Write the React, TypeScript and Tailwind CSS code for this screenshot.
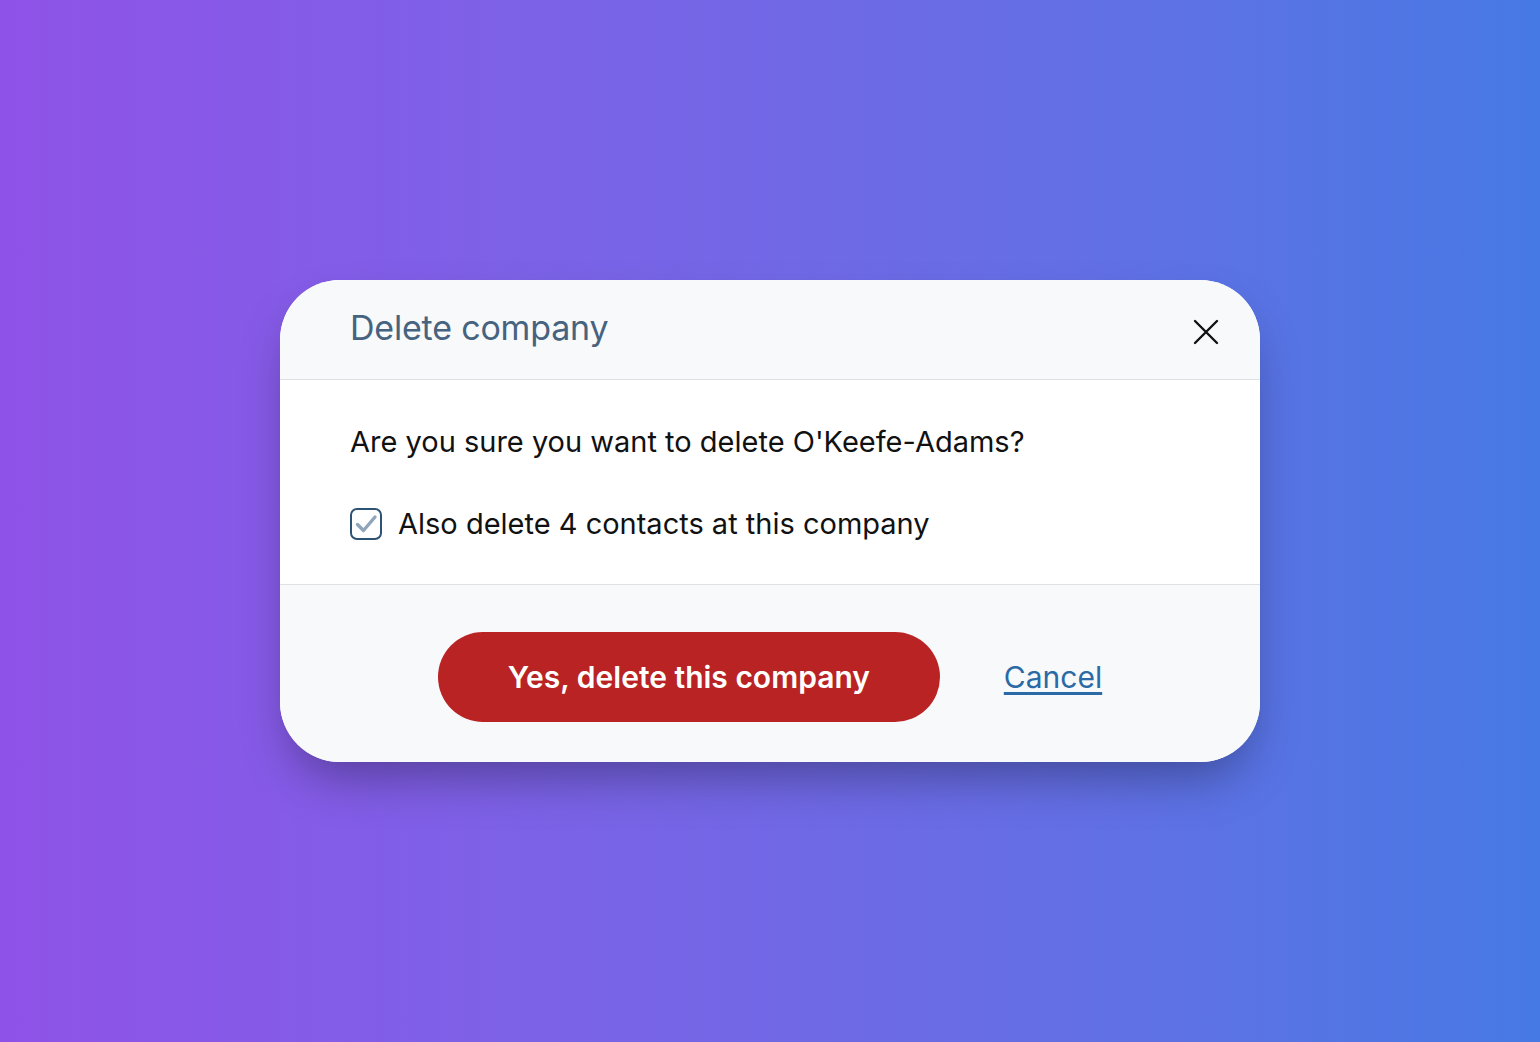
import React from "react";

export default function App() {
  return (
    <div
      className="w-[1540px] h-[1042px] flex items-center justify-center bg-gradient-to-r from-[#8f52e8] to-[#4679e4]"
      style={{ fontFamily: "Inter, 'Noto Sans', sans-serif" }}
    >
      <div className="w-[980px] rounded-[60px] overflow-hidden bg-white shadow-[0_25px_50px_-12px_rgba(0,0,0,0.35)] flex flex-col">
        <div className="h-[100px] bg-[#f8f9fb] border-b border-[#dfe1e5] flex items-start justify-between pl-[70px] pr-[40px]">
          <h2 className="mt-[26px] text-[34px] leading-[44px] text-[#46637f] font-normal tracking-[-0.2px]">
            Delete company
          </h2>
          <button className="mt-[38px] w-[28px] h-[28px] flex items-center justify-center text-[#111]">
            <svg width="28" height="28" viewBox="0 0 28 28" fill="none">
              <path d="M3 3L25 25M25 3L3 25" stroke="currentColor" strokeWidth="2.4" strokeLinecap="round" />
            </svg>
          </button>
        </div>
        <div className="h-[205px] bg-white border-b border-[#dfe1e5] pl-[70px] pt-[42px] flex flex-col">
          <p className="text-[29px] leading-[40px] text-[#111]">
            Are you sure you want to delete O'Keefe-Adams?
          </p>
          <label className="mt-[42px] flex items-center gap-[16px]">
            <span className="w-[32px] h-[32px] rounded-[7px] border-[2.5px] border-[#2d5274] flex items-center justify-center">
              <svg width="24" height="24" viewBox="0 0 24 24" fill="none">
                <path d="M3.5 12.5L9.5 18.5L21 5" stroke="#8fa5bb" strokeWidth="3.4" strokeLinecap="round" strokeLinejoin="round" />
              </svg>
            </span>
            <span className="text-[29px] leading-[40px] text-[#111]">
              Also delete 4 contacts at this company
            </span>
          </label>
        </div>
        <div className="h-[177px] bg-[#f8f9fb] flex items-start justify-center gap-[64px] pt-[47px]">
          <button className="w-[502px] h-[90px] rounded-full bg-[#b92323] text-white text-[30px] font-semibold">
            Yes, delete this company
          </button>
          <a href="#" className="mt-[25px] text-[30px] leading-[40px] text-[#2a6aa6] underline underline-offset-[4px]">
            Cancel
          </a>
        </div>
      </div>
    </div>
  );
}
